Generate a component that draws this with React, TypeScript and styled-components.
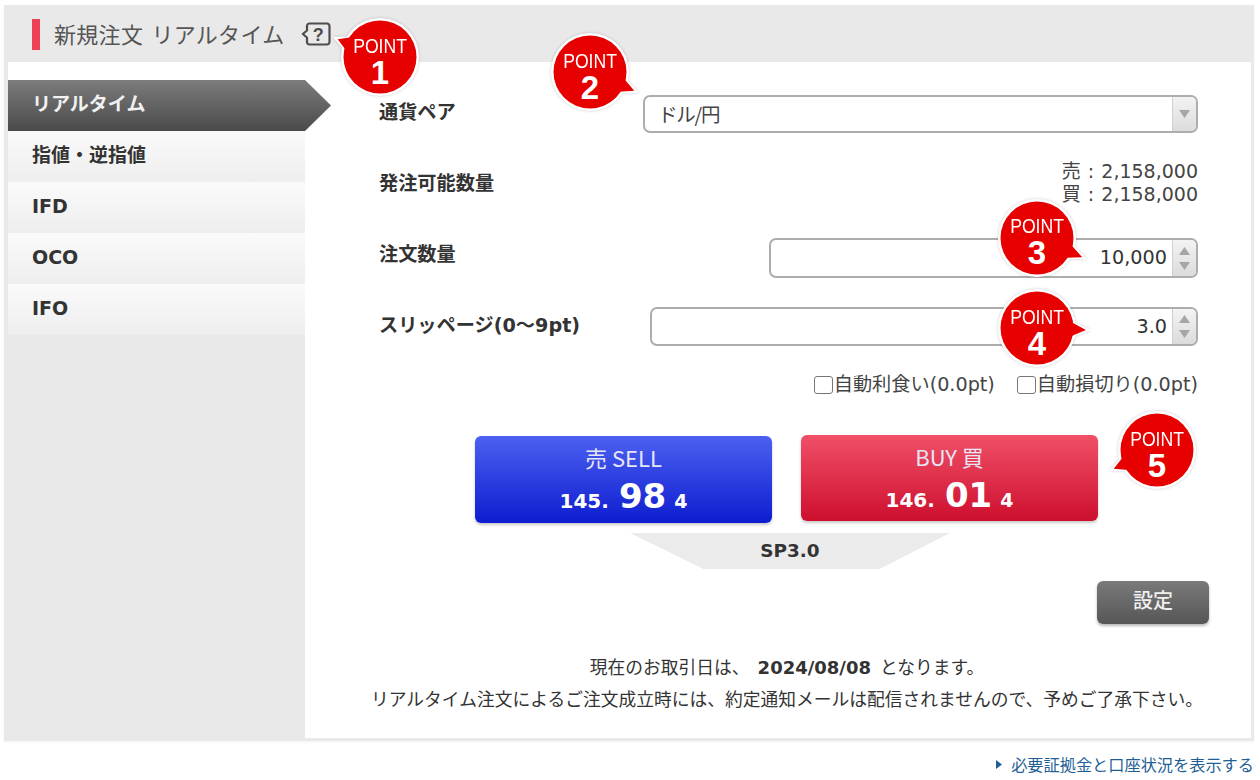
import React from "react";
import styled, { createGlobalStyle } from "styled-components";

const sans = `"DejaVu Sans", "Noto Sans CJK JP", sans-serif`;
const jp = `"Noto Sans CJK JP", "DejaVu Sans", sans-serif`;

const Global = createGlobalStyle`
  html, body { margin: 0; padding: 0; background: #fff; }
  body { font-family: ${sans}; color: #333; }
  * { box-sizing: border-box; }
`;

const Page = styled.div`
  position: relative;
  width: 1260px;
  height: 780px;
  padding: 5px 6px 0 4px;
  overflow: hidden;
`;
const Frame = styled.div`
  background: #e9e9e9;
  height: 736px;
  display: flex;
  flex-direction: column;
  box-shadow: 0 1px 2px rgba(0, 0, 0, 0.06);
`;
const Header = styled.header`
  height: 57px;
  flex: none;
  display: flex;
  align-items: center;
  padding: 1px 0 0 28px;
`;
const RedBar = styled.span`
  width: 8px;
  height: 31px;
  background: #ee4158;
  margin-right: 14px;
`;
const Title = styled.h1`
  margin: 0 16px 0 0;
  font: 400 22px/1 ${jp};
  letter-spacing: 0.3px;
  word-spacing: 3px;
  color: #555;
  white-space: nowrap;
  padding-bottom: 3px;
`;
const HelpIcon = styled.svg`
  width: 30px;
  height: 26px;
  flex: none;
  margin-top: 2px;
`;
const Body = styled.div`
  flex: 1;
  display: flex;
  padding: 0 3px 3px 0;
`;
const Side = styled.aside`
  width: 301px;
  flex: none;
  padding-left: 4px;
`;
const Nav = styled.nav`
  background: #fff;
  padding-top: 18px;
  position: relative;
  z-index: 2;
`;
const MenuItem = styled.div<{ $active?: boolean }>`
  height: 51px;
  display: flex;
  align-items: center;
  padding: 0 0 ${(p) => (p.$active ? 3 : 2)}px 24px;
  font: 700 19px/1 ${sans};
  letter-spacing: 0;
  color: ${(p) => (p.$active ? "#f2f2f2" : "#333")};
  background: ${(p) =>
    p.$active
      ? "linear-gradient(#7c7c7c, #4a4a4a)"
      : "linear-gradient(#fafafa, #eeeeee)"};
  ${(p) =>
    p.$active
      ? `width: calc(100% + 26px); clip-path: polygon(0 0, 297px 0, 100% 50%, 297px 100%, 0 100%);`
      : ""}
`;
const Main = styled.main`
  flex: 1;
  background: #fff;
  padding: 33px 53px 0 74px;
  display: flex;
  flex-direction: column;
  position: relative;
`;
const Row = styled.div<{ $h: number; $mt?: number }>`
  height: ${(p) => p.$h}px;
  margin-top: ${(p) => p.$mt ?? 0}px;
  display: flex;
  align-items: center;
  justify-content: space-between;
  flex: none;
`;
const Label = styled.label<{ $up?: number }>`
  font: 700 19.2px/1 ${sans};
  color: #333;
  white-space: nowrap;
  margin-bottom: ${(p) => p.$up ?? 0}px;
`;
const Field = styled.div<{ $w: number }>`
  width: ${(p) => p.$w}px;
  height: 100%;
  border: 2px solid #adadad;
  border-radius: 7px;
  background: #fff;
  display: flex;
  align-items: center;
  overflow: hidden;
`;
const SelectText = styled.span`
  flex: 1;
  padding-left: 13px;
  font: 400 19.5px/1 ${jp};
  color: #444;
  letter-spacing: -1.2px;
`;
const NumberText = styled.span`
  flex: 1;
  text-align: right;
  padding-right: 4px;
  font: 400 19.2px/1 ${sans};
  color: #333;
`;
const Stepper = styled.div`
  width: 24px;
  height: 100%;
  flex: none;
  margin-left: 1px;
  background: linear-gradient(#f3f3f3, #dcdcdc);
  border-left: 1px solid #d0d0d0;
  display: flex;
  flex-direction: column;
  align-items: center;
  justify-content: center;
  gap: 5px;
`;
const Arrow = styled.svg`
  width: 13px;
  height: 10px;
  display: block;
`;
const Amounts = styled.div`
  text-align: right;
  font: 400 19px/23px ${sans};
  color: #444;
  word-spacing: 1px;
`;
const Checks = styled.div`
  height: 24px;
  margin-top: 27px;
  flex: none;
  display: flex;
  justify-content: flex-end;
  gap: 22px;
`;
const Check = styled.label`
  display: flex;
  align-items: center;
  font: 400 19.2px/1 ${sans};
  color: #444;
  white-space: nowrap;
`;
const Box = styled.input`
  appearance: none;
  width: 19px;
  height: 18px;
  margin: 0 1px 0 0;
  border: 1.5px solid #777;
  border-radius: 3px;
  background: #fff;
  flex: none;
`;
const Trades = styled.div`
  margin: 38px 0 0 96px;
  display: flex;
  gap: 29px;
  align-items: flex-start;
`;
const TradeButton = styled.button<{ $side: "sell" | "buy" }>`
  width: 297px;
  height: ${(p) => (p.$side === "sell" ? 87 : 86)}px;
  margin-top: ${(p) => (p.$side === "sell" ? 1 : 0)}px;
  border: 0;
  border-radius: 6px;
  padding: 9px 0 0;
  color: #fff;
  background: ${(p) =>
    p.$side === "sell"
      ? "linear-gradient(#4c60f1, #0d1dcf)"
      : "linear-gradient(#f05068, #cd0f2e)"};
  box-shadow: 0 2px 3px rgba(0, 0, 0, 0.22);
  display: flex;
  flex-direction: column;
  align-items: center;
`;
const TradeName = styled.span`
  font: 400 22px/24px ${jp};
  color: #e6e6f6;
`;
const Price = styled.span`
  display: flex;
  align-items: baseline;
  justify-content: center;
  font: 700 20px/40px ${sans};
  margin-top: 7px;
`;
const PriceBig = styled.b`
  font: 700 34px/40px ${sans};
  margin: 0 8px 0 10px;
`;
const PriceEnd = styled.span`
  font: 700 19px/40px ${sans};
`;
const Spread = styled.div`
  width: 320px;
  height: 36px;
  margin: 10px 0 0 251px;
  flex: none;
  background: #ebebeb;
  clip-path: polygon(0 0, 100% 0, 78% 100%, 23% 100%);
  display: flex;
  align-items: center;
  justify-content: center;
  font: 700 18.4px/1 ${sans};
  color: #333;
`;
const SettingsRow = styled.div`
  margin: 12px -11px 0 0;
  display: flex;
  justify-content: flex-end;
`;
const SettingsButton = styled.button`
  width: 112px;
  height: 43px;
  border: 0;
  border-radius: 6px;
  padding: 0 0 5px;
  background: linear-gradient(#7a7a7a, #565656);
  box-shadow: 0 2px 3px rgba(0, 0, 0, 0.28);
  color: #efefef;
  font: 500 20px/1 ${jp};
`;
const Notes = styled.div`
  margin: 26px -9px 0 -12px;
  text-align: center;
  font: 400 17.75px/32px ${jp};
  color: #333;
  white-space: nowrap;
`;
const NoteLine = styled.div`
  height: 32px;
`;
const DateText = styled.b`
  font: 700 18px/1 ${sans};
  margin: 0 9px 0 8px;
`;
const Footer = styled.div`
  margin-top: 13px;
  display: flex;
  justify-content: flex-end;
  align-items: center;
  gap: 9px;
  height: 20px;
`;
const FootLink = styled.a`
  font: 400 16.2px/20px ${jp};
  color: #1f5f96;
  white-space: nowrap;
`;
const Caret = styled.svg`
  width: 6px;
  height: 9px;
`;

/* callout badges sit over the form, so they are placed by coordinate */
const Badge = styled.div<{ $x: number; $y: number; $d: number }>`
  position: absolute;
  left: ${(p) => p.$x}px;
  top: ${(p) => p.$y}px;
  width: ${(p) => p.$d}px;
  height: ${(p) => p.$d}px;
  z-index: 5;
`;
const BadgeArt = styled.svg`
  position: absolute;
  inset: 0;
  width: 100%;
  height: 100%;
  overflow: visible;
  filter: drop-shadow(0 0 1.5px rgba(0, 0, 0, 0.2));
`;
const BadgeText = styled.div`
  position: absolute;
  inset: 0;
  color: #fff;
  text-align: center;
  display: flex;
  flex-direction: column;
  align-items: center;
  justify-content: center;
  padding-top: 9px;
`;
const BadgeWord = styled.span`
  font: 400 21px/22px "Liberation Sans", sans-serif;
  transform: scaleX(0.84);
  white-space: nowrap;
`;
const BadgeNumber = styled.span`
  font: 700 33px/32px "Liberation Sans", sans-serif;
`;

function Point({ n, cx, cy, tip }: { n: number; cx: number; cy: number; tip: [number, number] }) {
  const r = 40;
  const dx = tip[0] - cx;
  const dy = tip[1] - cy;
  const angle = Math.atan2(dy, dx);
  const spread = 0.2;
  const a = [r + Math.cos(angle - spread) * (r - 5), r + Math.sin(angle - spread) * (r - 5)];
  const b = [r + Math.cos(angle + spread) * (r - 5), r + Math.sin(angle + spread) * (r - 5)];
  const outer = `${a[0]},${a[1]} ${r + dx},${r + dy} ${b[0]},${b[1]}`;
  const inner = `${a[0]},${a[1]} ${r + dx - Math.cos(angle) * 3},${r + dy - Math.sin(angle) * 3} ${b[0]},${b[1]}`;
  return (
    <Badge $x={cx - r} $y={cy - r} $d={r * 2}>
      <BadgeArt viewBox="0 0 80 80">
        <polygon points={outer} fill="#fff" stroke="#fff" strokeWidth="2" strokeLinejoin="round" />
        <circle cx={r} cy={r} r={r - 1} fill="#fff" />
        <circle cx={r} cy={r} r={r - 3.5} fill="#e60000" />
        <polygon points={inner} fill="#e60000" />
      </BadgeArt>
      <BadgeText>
        <BadgeWord>POINT</BadgeWord>
        <BadgeNumber>{n}</BadgeNumber>
      </BadgeText>
    </Badge>
  );
}

const Up = () => (
  <Arrow viewBox="0 0 13 10">
    <path d="M6.5 1 L12 9 H1 Z" fill="#a6a6a6" />
  </Arrow>
);
const Down = () => (
  <Arrow viewBox="0 0 13 10">
    <path d="M1 1 H12 L6.5 9 Z" fill="#a6a6a6" />
  </Arrow>
);

export default function App() {
  return (
    <Page>
      <Global />
      <Frame>
        <Header>
          <RedBar />
          <Title>新規注文 リアルタイム</Title>
          <HelpIcon viewBox="0 0 30 26">
            <path
              d="M6 4 a2.5 2.5 0 0 1 2.5 -2.5 H26 a2.5 2.5 0 0 1 2.5 2.5 V20 a2.5 2.5 0 0 1 -2.5 2.5 H8.5 a2.5 2.5 0 0 1 -2.5 -2.5 V15.5 L1.8 12 L6 8.5 Z"
              fill="none"
              stroke="#4d4d4d"
              strokeWidth="2.2"
              strokeLinejoin="round"
            />
            <text x="17.3" y="18.5" textAnchor="middle" fontFamily="Liberation Sans, sans-serif" fontWeight="700" fontSize="18" fill="#4d4d4d">
              ?
            </text>
          </HelpIcon>
        </Header>
        <Body>
          <Side>
            <Nav>
              <MenuItem $active>リアルタイム</MenuItem>
              <MenuItem>指値・逆指値</MenuItem>
              <MenuItem>IFD</MenuItem>
              <MenuItem>OCO</MenuItem>
              <MenuItem>IFO</MenuItem>
            </Nav>
          </Side>
          <Main>
            <Row $h={38}>
              <Label $up={2}>通貨ペア</Label>
              <Field $w={555}>
                <SelectText>ドル/円</SelectText>
                <Stepper>
                  <Down />
                </Stepper>
              </Field>
            </Row>
            <Row $h={46} $mt={27}>
              <Label $up={-2}>発注可能数量</Label>
              <Amounts>
                <div>売 : 2,158,000</div>
                <div>買 : 2,158,000</div>
              </Amounts>
            </Row>
            <Row $h={40} $mt={32}>
              <Label $up={6}>注文数量</Label>
              <Field $w={429}>
                <NumberText>10,000</NumberText>
                <Stepper>
                  <Up />
                  <Down />
                </Stepper>
              </Field>
            </Row>
            <Row $h={39} $mt={29}>
              <Label $up={1}>スリッページ(0〜9pt)</Label>
              <Field $w={548}>
                <NumberText>3.0</NumberText>
                <Stepper>
                  <Up />
                  <Down />
                </Stepper>
              </Field>
            </Row>
            <Checks>
              <Check>
                <Box type="checkbox" />
                自動利食い(0.0pt)
              </Check>
              <Check>
                <Box type="checkbox" />
                自動損切り(0.0pt)
              </Check>
            </Checks>
            <Trades>
              <TradeButton $side="sell">
                <TradeName>売 SELL</TradeName>
                <Price>
                  145.<PriceBig>98</PriceBig>
                  <PriceEnd>4</PriceEnd>
                </Price>
              </TradeButton>
              <TradeButton $side="buy">
                <TradeName>BUY 買</TradeName>
                <Price>
                  146.<PriceBig>01</PriceBig>
                  <PriceEnd>4</PriceEnd>
                </Price>
              </TradeButton>
            </Trades>
            <Spread>SP3.0</Spread>
            <SettingsRow>
              <SettingsButton>設定</SettingsButton>
            </SettingsRow>
            <Notes>
              <NoteLine>
                現在のお取引日は、<DateText>2024/08/08</DateText>となります。
              </NoteLine>
              <NoteLine>リアルタイム注文によるご注文成立時には、約定通知メールは配信されませんので、予めご了承下さい。</NoteLine>
            </Notes>
          </Main>
        </Body>
      </Frame>
      <Footer>
        <Caret viewBox="0 0 6 9">
          <path d="M0 0 L6 4.5 L0 9 Z" fill="#1f5f96" />
        </Caret>
        <FootLink>必要証拠金と口座状況を表示する</FootLink>
      </Footer>
      <Point n={1} cx={380} cy={57} tip={[335, 38]} />
      <Point n={2} cx={590} cy={72} tip={[637, 92]} />
      <Point n={3} cx={1037} cy={237.5} tip={[1085, 258]} />
      <Point n={4} cx={1037} cy={328} tip={[1089, 330]} />
      <Point n={5} cx={1157} cy={450} tip={[1111, 470]} />
    </Page>
  );
}
